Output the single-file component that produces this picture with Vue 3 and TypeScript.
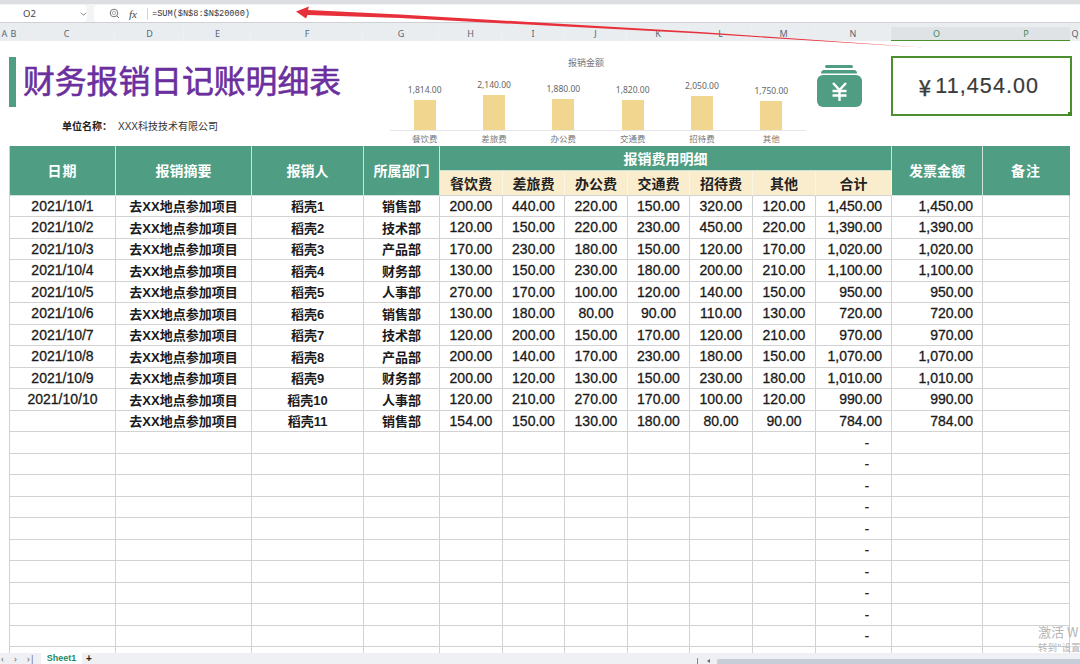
<script setup lang="ts">
interface Row { date: string; person: string; dept: string; vals: number[]; total: number }

const depts = ['销售部', '技术部', '产品部', '财务部', '人事部']
const raw: number[][] = [
  [200, 440, 220, 150, 320, 120, 1450],
  [120, 150, 220, 230, 450, 220, 1390],
  [170, 230, 180, 150, 120, 170, 1020],
  [130, 150, 230, 180, 200, 210, 1100],
  [270, 170, 100, 120, 140, 150, 950],
  [130, 180, 80, 90, 110, 130, 720],
  [120, 200, 150, 170, 120, 210, 970],
  [200, 140, 170, 230, 180, 150, 1070],
  [200, 120, 130, 150, 230, 180, 1010],
  [120, 210, 270, 170, 100, 120, 990],
  [154, 150, 130, 180, 80, 90, 784],
]
const rows: Row[] = raw.map((r, i) => ({
  date: i < 10 ? `2021/10/${i + 1}` : '',
  person: `稻壳${i + 1}`,
  dept: depts[i % 5],
  vals: r.slice(0, 6),
  total: r[6],
}))
const emptyRows = Array.from({ length: 10 }, (_, i) => i)
const money = (n: number) =>
  n.toLocaleString('en-US', { minimumFractionDigits: 2, maximumFractionDigits: 2 })

const columns = [
  ['A', false], ['B', false], ['C', false], ['D', false], ['E', false], ['F', false], ['G', false],
  ['H', false], ['I', false], ['J', false], ['K', false], ['L', false], ['M', false], ['N', false],
  ['O', true], ['P', true], ['Q', false],
] as [string, boolean][]

const chart = [
  { label: '餐饮费', value: 1814 },
  { label: '差旅费', value: 2140 },
  { label: '办公费', value: 1880 },
  { label: '交通费', value: 1820 },
  { label: '招待费', value: 2050 },
  { label: '其他', value: 1750 },
]
const barHeight = (v: number) => `${(v * 0.0166).toFixed(1)}px`
const subHeads = ['餐饮费', '差旅费', '办公费', '交通费', '招待费', '其他', '合计']
</script>

<template>
  <div class="page">
    <div class="topstrip"></div>
    <div class="formula-bar">
      <div class="namebox"><span class="cellname">O2</span>
        <svg class="chev" width="8" height="6" viewBox="0 0 8 6"><path d="M1 1.5 4 4.5 7 1.5" fill="none" stroke="#777" stroke-width="1"/></svg>
      </div>
      <div class="formula">
        <svg class="zoom-ic" width="11" height="11" viewBox="0 0 11 11"><circle cx="5" cy="5" r="3.8" fill="none" stroke="#777" stroke-width="1"/><circle cx="5" cy="5" r="1.6" fill="none" stroke="#999" stroke-width=".8"/><path d="M8 8 10 10" stroke="#777" stroke-width="1"/></svg>
        <span class="fx">fx</span>
        <span class="divider"></span>
        <span class="ftext">=SUM($N$8:$N$20000)</span>
      </div>
    </div>

    <div class="col-header">
      <div v-for="[name, sel] in columns" :key="name" class="col" :class="{ sel }">{{ name }}</div>
    </div>

    <div class="sheet">
      <div class="banner">
        <div class="title-block">
          <div class="title-row">
            <div class="accent"></div>
            <h1 class="title">财务报销日记账明细表</h1>
          </div>
          <div class="company"><b>单位名称：</b><span>XXX科技技术有限公司</span></div>
        </div>

        <div class="chart">
          <div class="chart-title">报销金额</div>
          <div class="plot">
            <div v-for="c in chart" :key="c.label" class="bar-col">
              <span class="bar-val">{{ money(c.value) }}</span>
              <div class="bar" :style="{ height: barHeight(c.value) }"></div>
            </div>
          </div>
          <div class="axis">
            <span v-for="c in chart" :key="c.label">{{ c.label }}</span>
          </div>
        </div>

        <svg class="bag" width="46" height="43" viewBox="0 0 46 43">
          <rect x="9" y="1" width="28" height="3" rx="1.5" fill="#4f9d82"/>
          <path d="M5 9.5C5 7.5 6 6 8 6H38C40 6 41 7.5 41 9.5Z" fill="#4f9d82"/>
          <rect x="1" y="11" width="45" height="32" rx="6" fill="#4f9d82"/>
          <path d="M17 19 23.5 26 30 19M16.5 27H30.5M16.5 31.5H30.5M23.5 26V37" fill="none" stroke="#fff" stroke-width="2.4"/>
        </svg>

        <div class="total-box"><span class="yen">¥</span>11,454.00<i class="handle"></i></div>
      </div>

      <div class="grid">
        <div class="c hd span2 h-date">日期</div>
        <div class="c hd span2 h-abs">报销摘要</div>
        <div class="c hd span2 h-per">报销人</div>
        <div class="c hd span2 h-dep">所属部门</div>
        <div class="c hd h-detail">报销费用明细</div>
        <div class="c hd span2 h-inv">发票金额</div>
        <div class="c hd span2 h-note">备注</div>
        <div v-for="s in subHeads" :key="s" class="c sub">{{ s }}</div>

        <template v-for="r in rows" :key="r.person">
          <div class="c num">{{ r.date }}</div>
          <div class="c txt">去XX地点参加项目</div>
          <div class="c txt">{{ r.person }}</div>
          <div class="c txt">{{ r.dept }}</div>
          <div v-for="(v, i) in r.vals" :key="i" class="c num">{{ money(v) }}</div>
          <div class="c num right">{{ money(r.total) }}</div>
          <div class="c num right">{{ money(r.total) }}</div>
          <div class="c"></div>
        </template>

        <template v-for="e in emptyRows" :key="e">
          <div v-for="n in 10" :key="n" class="c"></div>
          <div class="c num dash">-</div>
          <div class="c"></div>
          <div class="c"></div>
        </template>
        <div v-for="n in 13" :key="'tail' + n" class="c"></div>
      </div>
    </div>

    <div class="tabbar">
      <span class="nav n1">‹</span><span class="nav n2">›</span><span class="nav n3">›|</span>
      <span class="tab">Sheet1</span>
      <span class="plus">+</span>
      <span class="hsplit"></span>
      <span class="thumb-arrow"></span>
      <span class="thumb"></span>
    </div>

    <svg class="arrow" width="1080" height="60" viewBox="0 0 1080 60">
      <path d="M296 11.5 309 6.5 308 10 400 14.5 700 32 923 47.5 700 33.5 400 18 307.5 15 306 18.5Z" fill="#e8303a"/>
    </svg>

    <div class="watermark">
      <div class="wm1">激活 W</div>
      <div class="wm2">转到"设置</div>
    </div>
  </div>
</template>

<style>
html, body { margin: 0; padding: 0; background: #fff; overflow: hidden; }
</style>

<style scoped>
.page {
  position: relative;
  width: 1080px;
  height: 664px;
  overflow: hidden;
  display: flex;
  flex-direction: column;
  background: #fff;
  font-family: "Liberation Sans", "Noto Sans CJK SC", sans-serif;
  color: #1a1a1a;
}
.topstrip { height: 4px; background: #dcdee1; flex: none; }
.formula-bar {
  height: 18px;
  flex: none;
  display: flex;
  gap: 7px;
  background: #f3f4f6;
  border-bottom: 1px solid #cfd1d4;
  box-sizing: content-box;
}
.namebox {
  width: 87px;
  height: 17px;
  margin-top: 1px;
  background: #fff;
  border-radius: 0 4px 4px 0;
  display: flex;
  align-items: center;
  font: 9.5px "Noto Sans", sans-serif;
  color: #444;
}
.cellname { margin-left: 23px; }
.chev { margin-left: 44px; }
.formula {
  flex: 1;
  height: 17px;
  margin-top: 1px;
  background: #fff;
  border-radius: 4px 0 0 4px;
  display: flex;
  align-items: center;
  color: #444;
}
.zoom-ic { margin-left: 15px; }
.fx { margin-left: 9px; font: italic 11px "Liberation Serif", serif; width: 18px; }
.divider { width: 1px; height: 12px; background: #d5d5d5; }
.ftext { margin-left: 4px; font: 8.6px "Liberation Mono", monospace; color: #333; }

.col-header {
  flex: none;
  height: 18px;
  display: grid;
  grid-template-columns: 9px 9px 97px 69px 67px 112px 76px 63px 62px 63px 62px 63px 63px 76px 91px 88px 10px;
  background: #e9edf0;
  box-sizing: border-box;
}
.col {
  font: 9px/14px "Noto Sans", sans-serif;
  color: #5a6570;
  text-align: center;
  margin-top: 4px;
  box-shadow: inset -1px 0 0 #eef1f3;
  overflow: hidden;
}
.col.sel {
  background: #dfe3e6;
  color: #3c8a5c;
  border-bottom: 1px solid #4b8f2f;
  box-shadow: none;
}

.sheet { flex: 1; min-height: 0; overflow: hidden; }
.banner { height: 105px; display: flex; align-items: flex-start; }
.title-block { width: 390px; flex: none; padding: 16px 0 0 9px; box-sizing: border-box; }
.title-row { display: flex; align-items: center; gap: 7px; height: 50px; }
.accent { width: 7px; height: 50px; background: #4f9d82; }
.title {
  margin: 0 0 6px;
  font: 400 31.8px/44px "Noto Sans CJK SC", sans-serif;
  -webkit-text-stroke: 0.6px #6b2f9e;
  color: #6b2f9e;
  white-space: nowrap;
}
.company {
  margin: 13px 0 0 53px;
  font: 10px/14px "Liberation Sans", "Noto Sans CJK SC", sans-serif;
  color: #333;
  display: flex;
  gap: 11px;
}
.company b { font-weight: 700; color: #222; width: 45px; white-space: nowrap; }

.chart { width: 416px; flex: none; padding-top: 15px; box-sizing: border-box; height: 105px; }
.chart-title { height: 14px; font: 9px/14px "Noto Sans CJK SC", sans-serif; color: #777; text-align: center; transform: translateX(-12px); }
.plot {
  height: 60px;
  display: flex;
  align-items: flex-end;
  border-bottom: 1px solid #e6e6e6;
}
.bar-col { flex: 1; display: flex; flex-direction: column; align-items: center; }
.bar-val { font: 8.5px/12px "Noto Sans", sans-serif; color: #666; margin-bottom: 4px; }
.bar { width: 22px; background: #f0d68e; }
.axis { display: flex; margin-top: 1px; }
.axis span { flex: 1; text-align: center; font: 8.5px/13px "Noto Sans CJK SC", sans-serif; color: #777; }

.bag { flex: none; margin: 23px 0 0 10px; }
.total-box {
  position: relative;
  flex: none;
  margin: 15px 0 0 29px;
  width: 181px;
  height: 60px;
  box-sizing: border-box;
  border: 2px solid #4b8f2f;
  display: flex;
  align-items: center;
  justify-content: center;
  font: 21.5px "Liberation Sans", sans-serif;
  letter-spacing: 1.1px;
  color: #3a3a3a;
  padding-right: 5px;
  -webkit-text-stroke: 0.2px #3a3a3a;
}
.yen { font: 400 22px "Noto Sans CJK SC", sans-serif; margin-right: 3px; -webkit-text-stroke: 0.4px #3a3a3a; }
.handle { position: absolute; right: -2px; bottom: -2px; width: 4px; height: 4px; background: #3f8a25; }

.grid {
  margin-left: 9px;
  width: 1061px;
  display: grid;
  grid-template-columns: 106px 136px 112px 76px 63px 62px 63px 62px 63px 63px 76px 91px 87px;
  grid-template-rows: 25px 24.5px;
  grid-auto-rows: 21.5px;
  border-left: 1px solid #d2d2d2;
  box-sizing: border-box;
}
.c {
  box-sizing: border-box;
  border-right: 1px solid #d2d2d2;
  border-bottom: 1px solid #d2d2d2;
  display: flex;
  align-items: center;
  justify-content: center;
  white-space: nowrap;
  min-width: 0;
}
.hd {
  background: #4f9d82;
  color: #fff;
  font: 700 14px "Noto Sans CJK SC", sans-serif;
  border-color: #cfe3da;
}
.span2 { grid-row: span 2; }
.h-date { letter-spacing: 1px; }
.h-detail { grid-column: 5 / span 7; grid-row: 1; }
.h-inv { grid-column: 12; grid-row: 1 / span 2; }
.h-note { grid-column: 13; grid-row: 1 / span 2; border-right-color: #4f9d82; letter-spacing: 1px; }
.sub {
  background: #f9edcd;
  color: #222;
  font: 700 14px "Noto Sans CJK SC", sans-serif;
  border-color: #fbf5e5;
  border-bottom-color: #d2d2d2;
}
.num {
  font: 14px "Liberation Sans", sans-serif;
  -webkit-text-stroke: 0.3px #1a1a1a;
  color: #1a1a1a;
}
.txt {
  font: 700 13px "Liberation Sans", "Noto Sans CJK SC", sans-serif;
  color: #1a1a1a;
}
.right { justify-content: flex-end; padding-right: 9px; }
.dash { justify-content: flex-end; padding-right: 22px; font-size: 13px; }

.tabbar {
  flex: none;
  height: 11px;
  background: #eef0f3;
  display: flex;
  align-items: flex-start;
  font: 9px/11px "Noto Sans", sans-serif;
  color: #666;
  overflow: hidden;
}
.nav { flex: none; }
.n1 { margin-left: 1px; width: 13px; }
.n2 { width: 13px; }
.n3 { width: 14px; }
.tab {
  flex: none;
  width: 41px;
  height: 11px;
  background: #fff;
  color: #1f8a5f;
  font: 700 9px/11px "Liberation Sans", sans-serif;
  text-align: center;
}
.plus { margin-left: 4px; font: 700 10px/11px "Liberation Sans", sans-serif; color: #222; }
.hsplit { width: 1px; height: 6px; margin-top: 5px; background: #888; margin-left: 605px; }
.thumb-arrow {
  width: 0; height: 0; margin: 6px 0 0 9px;
  border-right: 3px solid #666; border-top: 2px solid transparent; border-bottom: 2px solid transparent;
}
.thumb { flex: 1; height: 5px; margin: 6px 0 0 7px; background: #c8ced8; border-radius: 2px 0 0 0; }

.arrow { position: absolute; left: 0; top: 0; pointer-events: none; }
.watermark { position: absolute; left: 1038px; top: 624px; color: #b5b5b5; white-space: nowrap; font-family: "Noto Sans CJK SC", sans-serif; }
.wm1 { font-size: 13px; line-height: 16px; }
.wm2 { font-size: 9.5px; line-height: 14px; }
</style>
